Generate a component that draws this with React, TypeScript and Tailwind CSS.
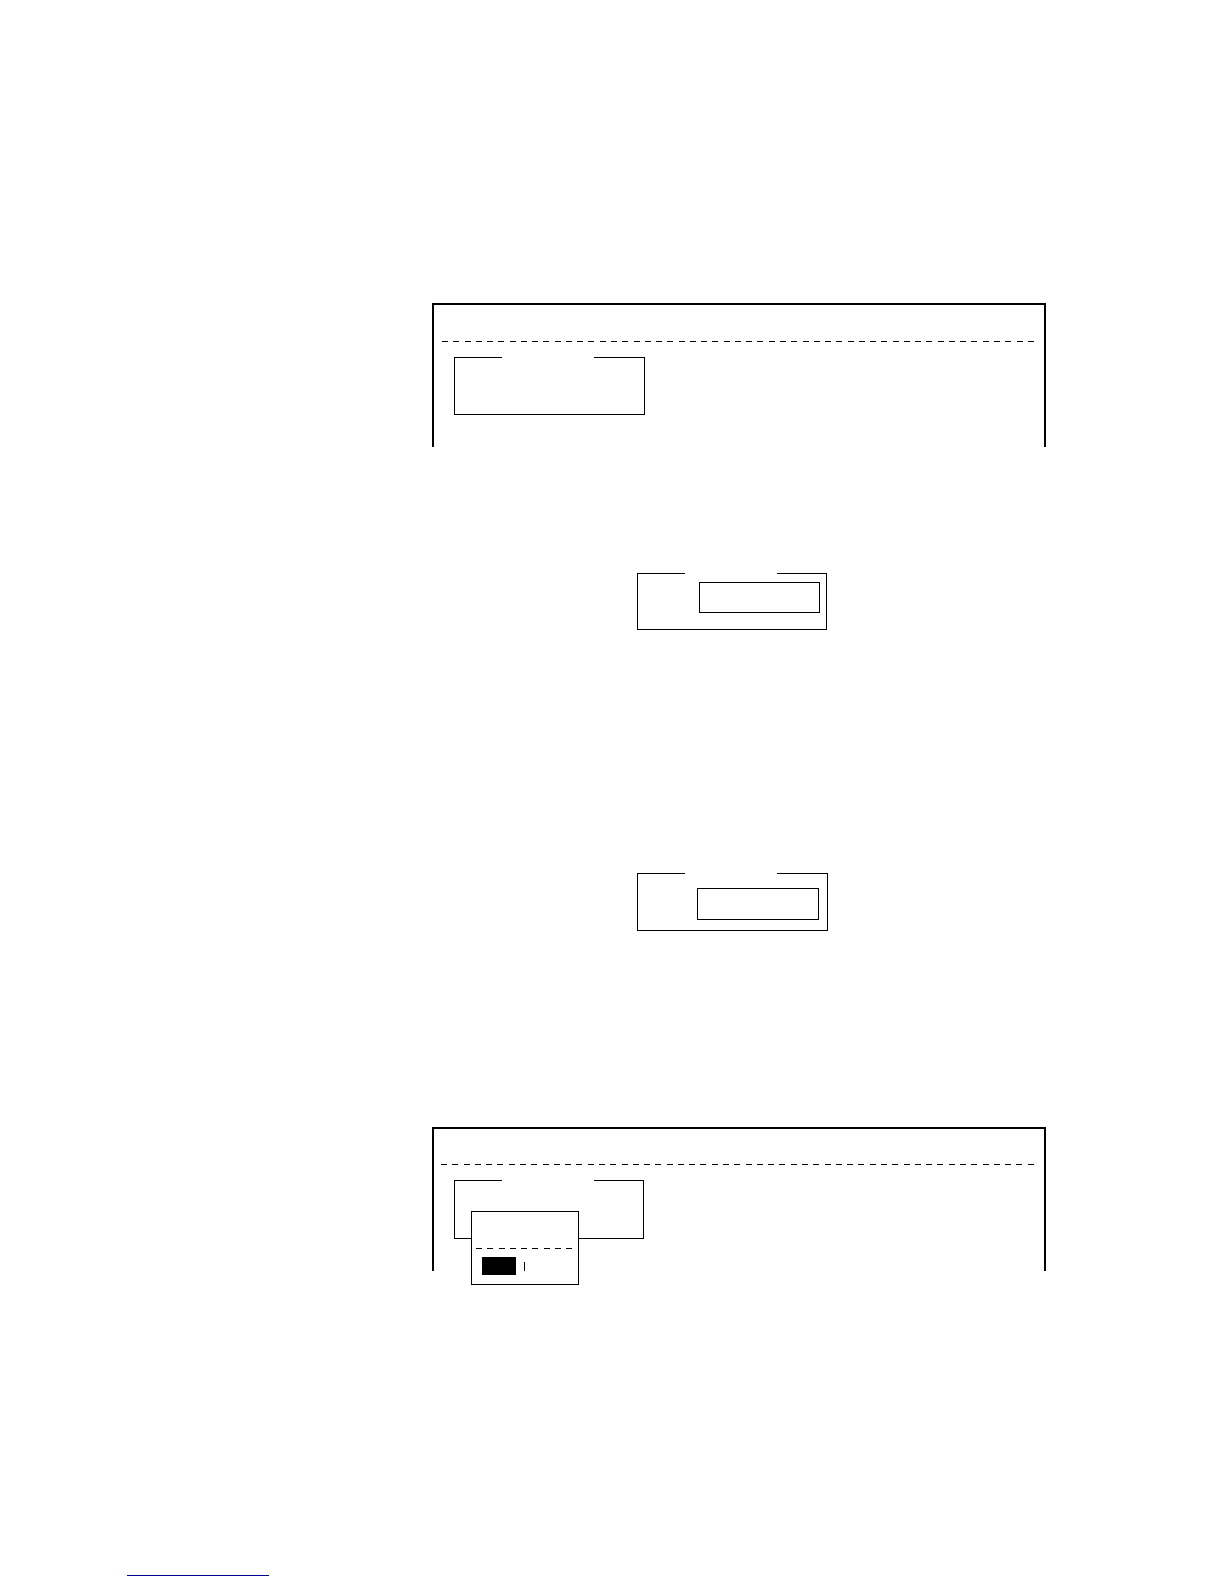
import type { ReactNode } from "react";

// ── Constants ─────────────────────────────────────────────────────────────────

const SCREEN_DASHES = 53;
const POPUP_DASHES = 9;

// ── Helpers ───────────────────────────────────────────────────────────────────

function DashedRule({ count, className }: { count: number; className: string }) {
  return (
    <div className={`flex justify-between ${className}`} aria-hidden="true">
      {Array.from({ length: count }, (_, i) => (
        <span key={i} className="h-px w-1.5 bg-black" />
      ))}
    </div>
  );
}

// Terminal screen, open at the bottom
function Screen({ className, children }: { className: string; children: ReactNode }) {
  return (
    <section className={`h-36 border-2 border-b-0 border-black ${className}`}>
      {children}
    </section>
  );
}

// Menu frame whose top border breaks for its title
function Frame({ className, children }: { className: string; children?: ReactNode }) {
  return (
    <fieldset className={`min-w-0 border border-black ${className}`}>
      <legend className="ml-[47px] h-px w-[92px]" />
      {children}
    </fieldset>
  );
}

function Popup() {
  return (
    <div className="absolute top-[31px] left-[17px] h-[74px] w-[108px] border border-black bg-white pt-9">
      <DashedRule count={POPUP_DASHES} className="mr-1.5 ml-1" />
      <div className="mt-2 ml-2.5 flex items-center gap-2">
        <span className="h-[18px] w-[34px] bg-black" />
        <span className="h-[9px] w-px bg-black" />
      </div>
    </div>
  );
}

// ── Page ──────────────────────────────────────────────────────────────────────

export default function App() {
  return (
    <div className="min-h-screen bg-white pt-[303px] pb-2 font-['Liberation_Sans',sans-serif]">
      <main className="mr-[178px] ml-[432px]">
        <Screen className="pt-9">
          <DashedRule count={SCREEN_DASHES} className="mr-2.5 ml-2" />
          <Frame className="mt-[15px] ml-5 h-[58px] w-[191px]" />
        </Screen>

        <Frame className="mt-[126px] ml-[205px] h-[57px] w-[190px]">
          <div className="mt-2 ml-[61px] h-[31px] w-[121px] border border-black" />
        </Frame>

        <Frame className="mt-[243px] ml-[205px] h-[58px] w-[191px]">
          <div className="mt-3.5 ml-[59px] h-8 w-[122px] border border-black" />
        </Frame>

        <Screen className="mt-[196px] pt-[35px]">
          <DashedRule count={SCREEN_DASHES} className="mr-2.5 ml-[7px]" />
          <div className="relative mt-[15px] ml-5">
            <Frame className="h-[59px] w-[190px]" />
            <Popup />
          </div>
        </Screen>
      </main>

      <footer className="mt-[304px] ml-[127px]">
        <a
          href="#"
          aria-label="Contents"
          className="block w-[142px] border-b border-[#000099]"
        />
      </footer>
    </div>
  );
}
